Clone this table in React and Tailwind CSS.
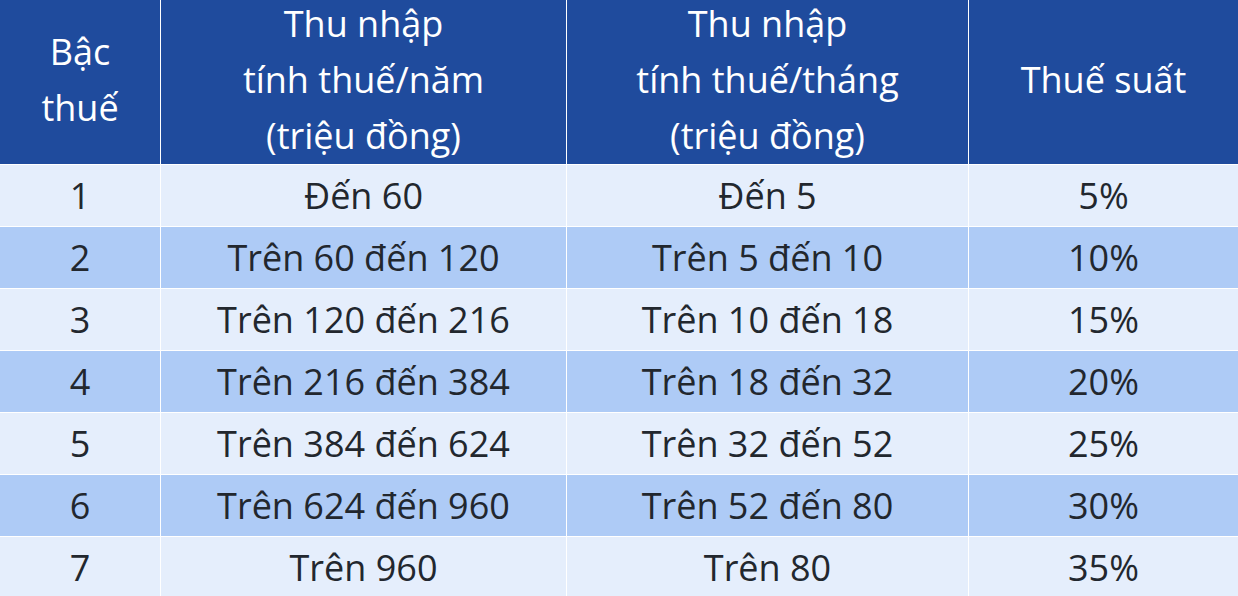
export default function App() {
  const rows = [
    ["1", "Đến 60", "Đến 5", "5%"],
    ["2", "Trên 60 đến 120", "Trên 5 đến 10", "10%"],
    ["3", "Trên 120 đến 216", "Trên 10 đến 18", "15%"],
    ["4", "Trên 216 đến 384", "Trên 18 đến 32", "20%"],
    ["5", "Trên 384 đến 624", "Trên 32 đến 52", "25%"],
    ["6", "Trên 624 đến 960", "Trên 52 đến 80", "30%"],
    ["7", "Trên 960", "Trên 80", "35%"],
  ];
  const head = "flex items-center justify-center text-center bg-[#1f4b9d] text-white font-medium leading-[56px] pb-1";
  return (
    <div className="w-[1238px] h-[596px] overflow-hidden bg-white" style={{ fontFamily: '"Open Sans", "Noto Sans", sans-serif' }}>
      <div className="grid grid-cols-[160px_405px_401px_269px] grid-rows-[164px_repeat(7,61px)] gap-px bg-white text-[36px]">
        <div className={head}>
          <div>Bậc<br />thuế</div>
        </div>
        <div className={head}>
          <div>Thu nhập<br />tính thuế/năm<br />(triệu đồng)</div>
        </div>
        <div className={head}>
          <div>Thu nhập<br />tính thuế/tháng<br />(triệu đồng)</div>
        </div>
        <div className={head}>
          <div>Thuế suất</div>
        </div>
        {rows.map((r, i) =>
          r.map((c, j) => (
            <div
              key={i + "-" + j}
              className={
                "flex items-center justify-center text-[#22272e] " +
                (i % 2 === 0 ? "bg-[#e5eefc]" : "bg-[#aecbf6]")
              }
            >
              {c}
            </div>
          ))
        )}
      </div>
    </div>
  );
}
